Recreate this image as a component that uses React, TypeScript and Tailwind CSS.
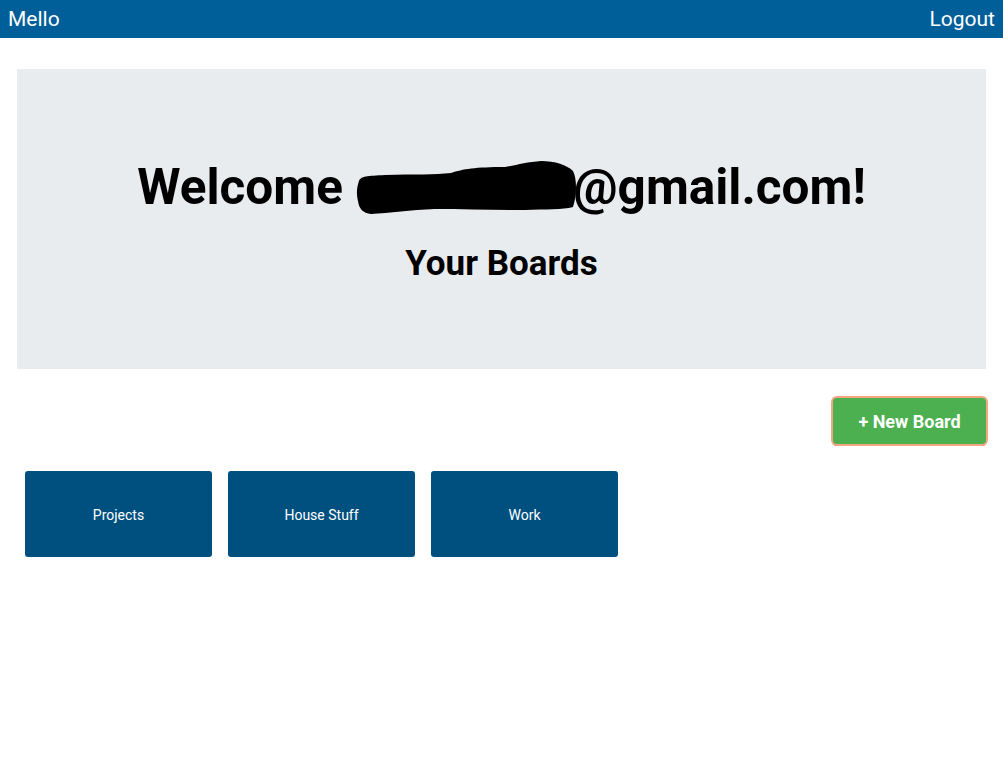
import React from 'react';

const boards = ['Projects', 'House Stuff', 'Work'];

function Scribble() {
  // redaction blot over the email name
  return (
    <svg width="222" height="58" viewBox="0 0 222 58" className="-mr-[4px] inline-block">
      <path
        d="M4 22 C6 17 12 17 30 16 C60 15 80 16 96 14 C108 10 120 8 150 8 C162 6 172 3 186 2 C200 2 212 6 218 12 C222 20 222 36 218 48 C208 51 190 50 170 51 C140 51 110 50 80 50 C55 51 35 54 16 55 C8 54 4 50 3 42 C1 34 2 28 4 22 Z"
        fill="#000"
      />
    </svg>
  );
}

export default function App() {
  return (
    <div className="min-h-screen bg-white" style={{ fontFamily: 'Roboto, "Liberation Sans", sans-serif' }}>
      <div className="flex h-[38px] items-center justify-between bg-[#005e98] px-2 pt-[1px] text-[21px] text-white">
        <span>Mello</span>
        <span>Logout</span>
      </div>

      <div className="px-[17px] pt-[31px]">
        <div className="flex h-[300px] flex-col items-center bg-[#e9ecef] pt-[89px]">
          <h1 className="flex h-[59px] items-center text-[49.5px] font-bold leading-[1.2] text-black">
            <span>Welcome&nbsp;</span>
            <Scribble />
            <span>@gmail.com!</span>
          </h1>
          <h2 className="mt-[26px] text-[35px] font-bold leading-[1.2] text-black">Your Boards</h2>
        </div>

        <div className="mt-[29px] flex justify-end">
          <button className="h-[46px] w-[153px] rounded-[4px] bg-[#4caf50] text-[18px] font-bold text-white shadow-[0_0_0_2px_#f4a582,0_2px_0_#8b5a2b]">
            + New Board
          </button>
        </div>

        <div className="mt-[27px] flex gap-[16px] px-[8px]">
          {boards.map((b) => (
            <div
              key={b}
              className="flex h-[86px] w-[187px] items-center justify-center rounded-[3px] bg-[#00507f] pt-[2px] text-[14px] text-white"
            >
              {b}
            </div>
          ))}
        </div>
      </div>
    </div>
  );
}
